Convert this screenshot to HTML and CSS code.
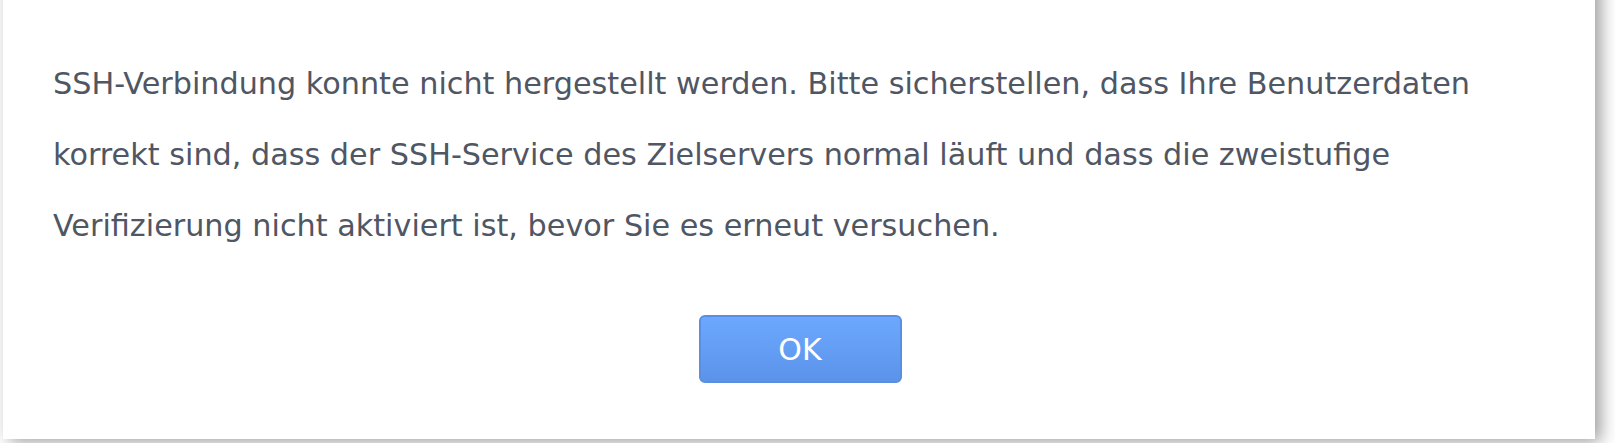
FILE: index.html
```html
<!DOCTYPE html>
<html>
<head>
<meta charset="utf-8">
<link rel="stylesheet" href="styles.css">
</head>
<body>
<div class="dialog">
  <p class="message">SSH-Verbindung konnte nicht hergestellt werden. Bitte sicherstellen, dass Ihre Benutzerdaten<br>korrekt sind, dass der SSH-Service des Zielservers normal läuft und dass die zweistufige<br>Verifizierung nicht aktiviert ist, bevor Sie es erneut versuchen.</p>
  <div class="actions">
    <button class="btn-ok">OK</button>
  </div>
</div>
</body>
</html>
```
FILE: styles.css
```css
html, body {
  margin: 0;
  padding: 0;
  background: #ffffff;
  overflow: hidden;
}
body {
  width: 1615px;
  height: 443px;
}
.dialog {
  box-sizing: border-box;
  width: 1592px;
  height: 459px;
  margin: -20px 0 0 3px;
  padding: 68px 50px 0 50px;
  background: #ffffff;
  box-shadow: 6px 3px 16px rgba(0, 0, 0, 0.38);
  font-family: "DejaVu Sans", Verdana, sans-serif;
}
.message {
  margin: 0;
  font-size: 30.25px;
  line-height: 71px;
  color: #4f5664;
  white-space: nowrap;
}
.actions {
  display: flex;
  justify-content: center;
  margin-top: 54px;
  padding-left: 2px;
}
.btn-ok {
  box-sizing: border-box;
  width: 203px;
  height: 68px;
  border: 2px solid #5a8ee0;
  border-radius: 6px;
  background: linear-gradient(#6ca8ff, #5c93ea);
  color: #ffffff;
  font-family: "DejaVu Sans", Verdana, sans-serif;
  font-size: 30px;
  padding: 0;
}
```
